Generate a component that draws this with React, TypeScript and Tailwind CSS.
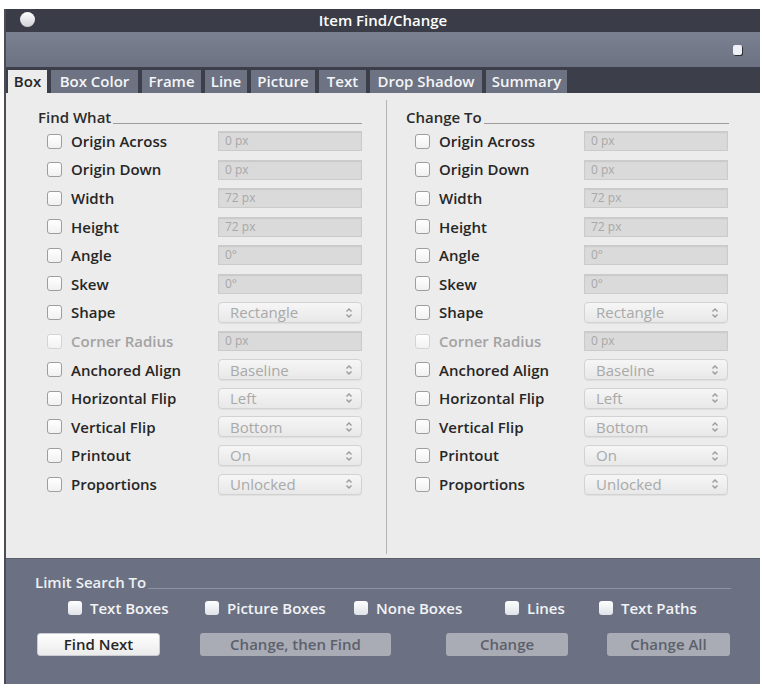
import React from "react";

type Row = { label: string; kind: "input" | "select"; value: string; disabled?: boolean };

const rows: Row[] = [
  { label: "Origin Across", kind: "input", value: "0 px" },
  { label: "Origin Down", kind: "input", value: "0 px" },
  { label: "Width", kind: "input", value: "72 px" },
  { label: "Height", kind: "input", value: "72 px" },
  { label: "Angle", kind: "input", value: "0°" },
  { label: "Skew", kind: "input", value: "0°" },
  { label: "Shape", kind: "select", value: "Rectangle" },
  { label: "Corner Radius", kind: "input", value: "0 px", disabled: true },
  { label: "Anchored Align", kind: "select", value: "Baseline" },
  { label: "Horizontal Flip", kind: "select", value: "Left" },
  { label: "Vertical Flip", kind: "select", value: "Bottom" },
  { label: "Printout", kind: "select", value: "On" },
  { label: "Proportions", kind: "select", value: "Unlocked" },
];

const tabs: { name: string; w: string }[] = [
  { name: "Box", w: "w-[39px]" },
  { name: "Box Color", w: "w-[87px]" },
  { name: "Frame", w: "w-[59px]" },
  { name: "Line", w: "w-[42px]" },
  { name: "Picture", w: "w-[64px]" },
  { name: "Text", w: "w-[47px]" },
  { name: "Drop Shadow", w: "w-[112px]" },
  { name: "Summary", w: "w-[81px]" },
];

function Stepper() {
  return (
    <svg width="8" height="12" viewBox="0 0 8 12" className="shrink-0">
      <path d="M1.5 4.5 L4 2 L6.5 4.5" fill="none" stroke="#9a9a9a" strokeWidth="1.4" />
      <path d="M1.5 7.5 L4 10 L6.5 7.5" fill="none" stroke="#9a9a9a" strokeWidth="1.4" />
    </svg>
  );
}

function Field({ row }: { row: Row }) {
  if (row.kind === "input") {
    return (
      <div className="w-[144px] h-[20px] bg-[#dadada] border border-[#cbcbcb] flex items-center px-[6px] text-[12px] text-[#a8a8a8] shadow-[inset_0_1px_1px_rgba(0,0,0,0.08)]">
        {row.value}
      </div>
    );
  }
  return (
    <div className="w-[144px] h-[21px] bg-gradient-to-b from-[#f6f6f6] to-[#e8e8e8] border border-[#d2d2d2] rounded-[4px] flex items-center justify-between pl-[11px] pr-[8px] text-[15px] text-[#a9a9a9] shadow-[0_1px_1px_rgba(0,0,0,0.06)]">
      <span>{row.value}</span>
      <Stepper />
    </div>
  );
}

function Column({ title, labelW, width }: { title: string; labelW: string; width: string }) {
  return (
    <div className={`flex flex-col ${width}`}>
      <div className="flex items-end mb-[6px] h-[16px]">
        <span className="text-[15px] font-semibold text-[#2b2b2b] leading-none">{title}</span>
        <div className="flex-1 border-b border-[#9c9c9c] mb-[1px] ml-[2px]" />
      </div>
      <div className="flex flex-col gap-[8.6px] pl-[9px]">
        {rows.map((r) => (
          <div key={r.label} className="flex items-center h-[20px]">
            <div
              className={`w-[15px] h-[15px] rounded-[3px] border bg-gradient-to-b from-white to-[#f1f1f1] shrink-0 ${
                r.disabled ? "border-[#d4d4d4]" : "border-[#9e9e9e]"
              }`}
            />
            <span
              className={`ml-[9px] text-[15px] font-semibold ${labelW} ${
                r.disabled ? "text-[#a3a3a3]" : "text-[#262626]"
              }`}
            >
              {r.label}
            </span>
            <Field row={r} />
          </div>
        ))}
      </div>
    </div>
  );
}

function SmallBox() {
  return <div className="w-[14px] h-[14px] rounded-[3px] bg-gradient-to-b from-white to-[#dfe2e8] shrink-0" />;
}

export default function App() {
  return (
    <div
      className="w-[762px] h-[690px] bg-white pt-[9px] pl-[4px] pr-[2px]"
      style={{ fontFamily: '"Open Sans", "DejaVu Sans", sans-serif' }}
    >
      <div className="w-[756px] h-[675px] flex flex-col border-l-[2px] border-[#4a4d55] bg-[#3c3f49]">
        {/* title bar */}
        <div className="h-[23px] bg-[#3a3d47] flex items-center relative">
          <div className="absolute left-[14px] top-[3px] w-[15px] h-[15px] rounded-full bg-gradient-to-b from-white to-[#d0d0d6]" />
          <div className="flex-1 text-center text-white text-[15px] font-semibold">Item Find/Change</div>
        </div>
        {/* toolbar */}
        <div className="h-[35px] bg-gradient-to-b from-[#7b8190] to-[#6c7281] flex items-center justify-end pr-[18px]">
          <div className="w-[9px] h-[10px] rounded-[2px] bg-[#eef0f4] shadow-[1px_1px_0_#2d2f36]" />
        </div>
        {/* tab strip */}
        <div className="h-[26px] bg-[#3c3f49] flex items-end pl-[2px] gap-[4px]">
          {tabs.map((t, i) => (
            <div
              key={t.name}
              className={`h-[23px] flex items-center justify-center text-[15px] font-semibold ${t.w} ${
                i === 0 ? "bg-[#ececec] text-[#262626]" : "bg-[#6d7383] text-[#f4f5f7]"
              }`}
            >
              {t.name}
            </div>
          ))}
        </div>
        {/* panel */}
        <div className="h-[465px] bg-[#ececec] flex pt-[16px]">
          <div className="w-[356px] pl-[32px]">
            <Column title="Find What" labelW="w-[147px]" width="w-[324px]" />
          </div>
          <div className="w-px bg-[#b4b4b4] mt-[-9px] mb-[4px] ml-[24px] mr-[19px]" />
          <div>
            <Column title="Change To" labelW="w-[145px]" width="w-[323px]" />
          </div>
        </div>
        {/* limit search */}
        <div className="flex-1 bg-[#6b7182] border-t border-[#5a5f6c] px-[29px] pt-[13px]">
          <div className="flex items-end h-[18px]">
            <span className="text-[15px] font-semibold text-[#eef0f4] leading-none">Limit Search To</span>
            <div className="flex-1 border-b border-[#8e93a0] ml-[2px] mb-[1px]" />
          </div>
          <div className="flex items-center h-[20px] mt-[8px] text-[15px] font-semibold text-[#f2f3f6]">
            <div className="flex items-center ml-[33px] w-[137px] gap-[8px]"><SmallBox />Text Boxes</div>
            <div className="flex items-center w-[149px] gap-[8px]"><SmallBox />Picture Boxes</div>
            <div className="flex items-center w-[151px] gap-[8px]"><SmallBox />None Boxes</div>
            <div className="flex items-center w-[94px] gap-[8px]"><SmallBox />Lines</div>
            <div className="flex items-center gap-[8px]"><SmallBox />Text Paths</div>
          </div>
          <div className="flex items-center mt-[14px] h-[24px] text-[15px] font-semibold">
            <div className="ml-[2px] w-[123px] h-[23px] rounded-[3px] bg-gradient-to-b from-white to-[#ebebeb] border border-[#c9ccd2] flex items-center justify-center text-[#262626]">
              Find Next
            </div>
            <div className="ml-[40px] w-[191px] h-[23px] rounded-[3px] bg-[#a9acb5] flex items-center justify-center text-[#5c606c]">
              Change, then Find
            </div>
            <div className="ml-[55px] w-[122px] h-[23px] rounded-[3px] bg-[#a9acb5] flex items-center justify-center text-[#5c606c]">
              Change
            </div>
            <div className="ml-[39px] w-[123px] h-[23px] rounded-[3px] bg-[#a9acb5] flex items-center justify-center text-[#5c606c]">
              Change All
            </div>
          </div>
        </div>
      </div>
    </div>
  );
}
